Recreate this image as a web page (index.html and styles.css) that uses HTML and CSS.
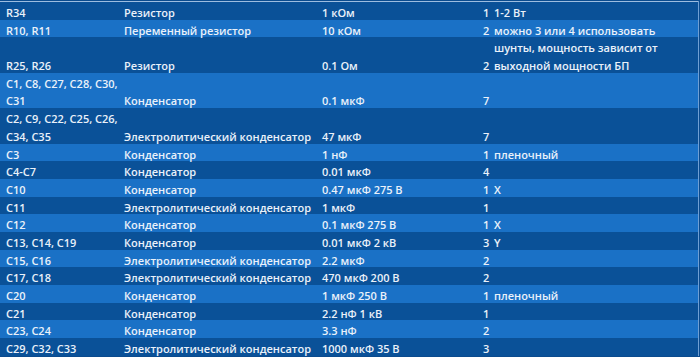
FILE: index.html
```html
<!DOCTYPE html>
<html lang="ru">
<head>
<meta charset="utf-8">
<link rel="stylesheet" href="styles.css">
</head>
<body>
<div class="frame">
<table class="bom">
<colgroup><col class="c-ref"><col class="c-name"><col class="c-val"><col class="c-qty"><col class="c-note"></colgroup>
<tbody>
<tr><td><span>R34</span></td><td><span>Резистор</span></td><td><span>1 кОм</span></td><td><span>1</span></td><td><span>1-2 Вт</span></td></tr>
<tr><td><span>R10, R11</span></td><td><span>Переменный резистор</span></td><td><span>10 кОм</span></td><td><span>2</span></td><td><span>можно 3 или 4 использовать</span></td></tr>
<tr><td><span>R25, R26</span></td><td><span>Резистор</span></td><td><span>0.1 Ом</span></td><td><span>2</span></td><td><span>шунты, мощность зависит от<br>выходной мощности БП</span></td></tr>
<tr><td><span>C1, C8, C27, C28, C30,<br>C31</span></td><td><span>Конденсатор</span></td><td><span>0.1 мкФ</span></td><td><span>7</span></td><td></td></tr>
<tr><td><span>C2, C9, C22, C25, C26,<br>C34, C35</span></td><td><span>Электролитический конденсатор</span></td><td><span>47 мкФ</span></td><td><span>7</span></td><td></td></tr>
<tr><td><span>C3</span></td><td><span>Конденсатор</span></td><td><span>1 нФ</span></td><td><span>1</span></td><td><span>пленочный</span></td></tr>
<tr><td><span>C4-C7</span></td><td><span>Конденсатор</span></td><td><span>0.01 мкФ</span></td><td><span>4</span></td><td></td></tr>
<tr><td><span>C10</span></td><td><span>Конденсатор</span></td><td><span>0.47 мкФ 275 В</span></td><td><span>1</span></td><td><span>X</span></td></tr>
<tr><td><span>C11</span></td><td><span>Электролитический конденсатор</span></td><td><span>1 мкФ</span></td><td><span>1</span></td><td></td></tr>
<tr><td><span>C12</span></td><td><span>Конденсатор</span></td><td><span>0.1 мкФ 275 В</span></td><td><span>1</span></td><td><span>X</span></td></tr>
<tr><td><span>C13, C14, C19</span></td><td><span>Конденсатор</span></td><td><span>0.01 мкФ 2 кВ</span></td><td><span>3</span></td><td><span>Y</span></td></tr>
<tr><td><span>C15, C16</span></td><td><span>Электролитический конденсатор</span></td><td><span>2.2 мкФ</span></td><td><span>2</span></td><td></td></tr>
<tr><td><span>C17, C18</span></td><td><span>Электролитический конденсатор</span></td><td><span>470 мкФ 200 В</span></td><td><span>2</span></td><td></td></tr>
<tr><td><span>C20</span></td><td><span>Конденсатор</span></td><td><span>1 мкФ 250 В</span></td><td><span>1</span></td><td><span>пленочный</span></td></tr>
<tr><td><span>C21</span></td><td><span>Конденсатор</span></td><td><span>2.2 нФ 1 кВ</span></td><td><span>1</span></td><td></td></tr>
<tr><td><span>C23, C24</span></td><td><span>Конденсатор</span></td><td><span>3.3 нФ</span></td><td><span>2</span></td><td></td></tr>
<tr><td><span>C29, C32, C33</span></td><td><span>Электролитический конденсатор</span></td><td><span>1000 мкФ 35 В</span></td><td><span>3</span></td><td></td></tr>
</tbody>
</table>
</div>
</body>
</html>
```
FILE: styles.css
```css
html, body {
  margin: 0;
  padding: 0;
  background: #0b4b8e;
}
.frame {
  padding-top: 1px;
  padding-right: 1px;
  width: 699px;
}
.bom {
  width: 699px;
  border-collapse: collapse;
  table-layout: fixed;
  border-top: 1px solid #9dbde0;
  border-right: 1px solid #6f9fd4;
  font-family: "Open Sans", "Noto Sans", sans-serif;
  font-size: 11px;
  font-weight: 600;
  color: #eaf1fa;
}
.c-ref { width: 124px; }
.c-name { width: 198px; }
.c-val { width: 161px; }
.c-qty { width: 11px; }
.bom td {
  padding: 0;
  line-height: 17.68px;
  vertical-align: bottom;
  white-space: nowrap;
}
.bom td > span {
  line-height: 12px;
  vertical-align: -2px;
}
.bom td:first-child { padding-left: 6px; }
.bom tr:nth-child(odd) { background: #0a5198; }
.bom tr:nth-child(even) { background: #1a71c6; }
```
